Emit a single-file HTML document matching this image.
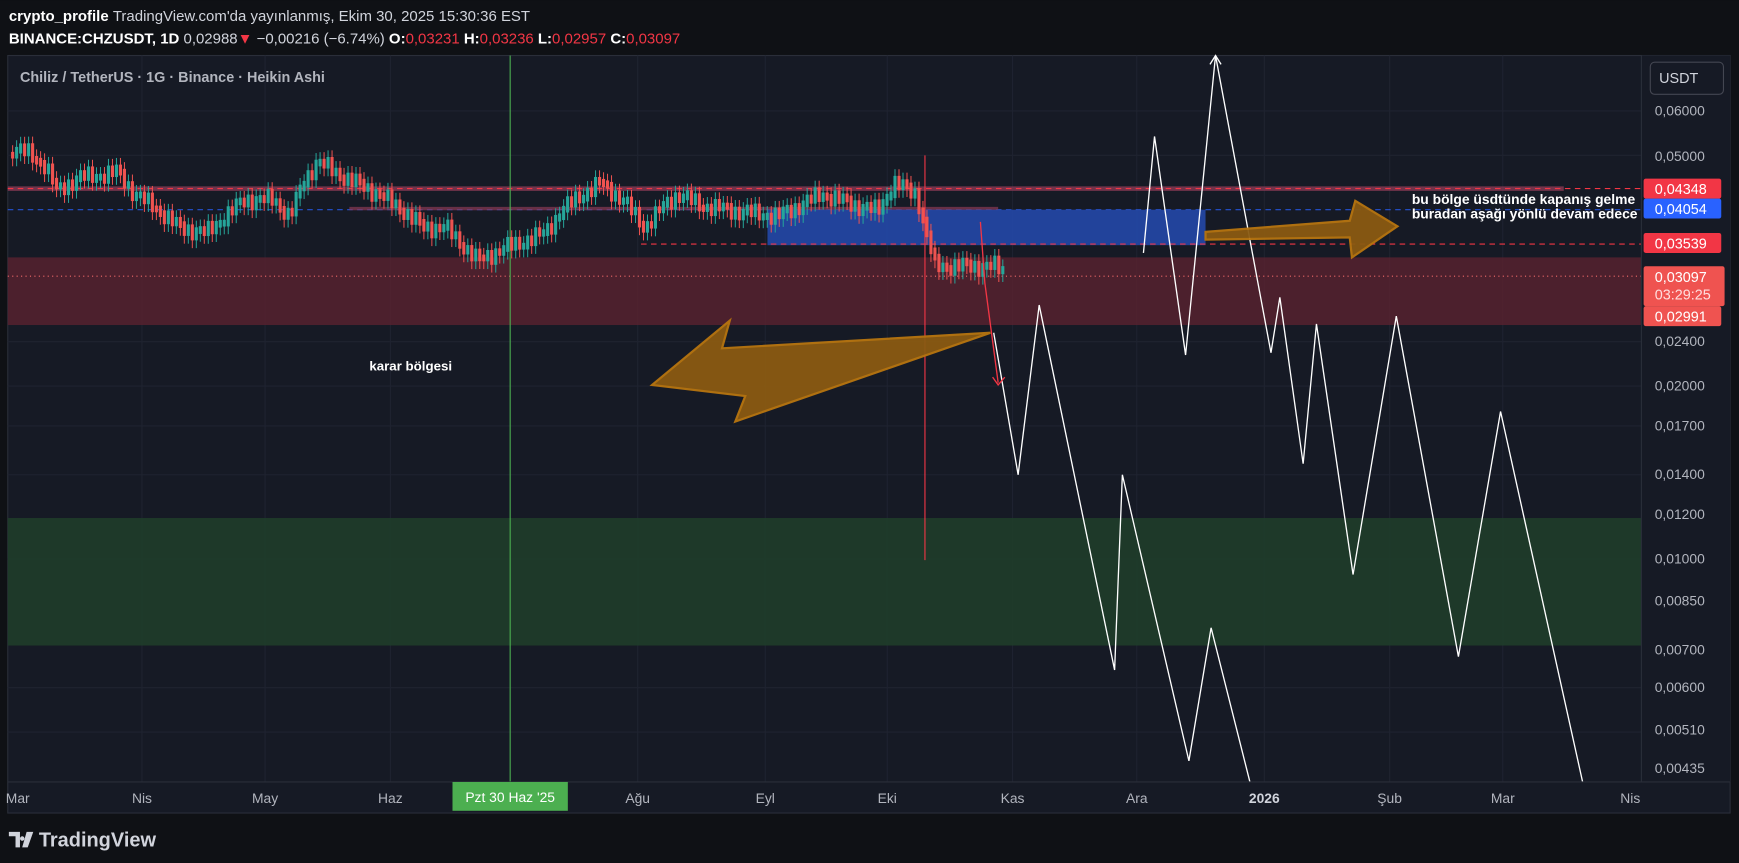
<!DOCTYPE html>
<html><head><meta charset="utf-8"><style>
html,body{margin:0;padding:0;background:#0f1115;overflow:hidden}
svg{display:block}
text{font-family:"Liberation Sans",sans-serif}
</style></head><body>
<svg id="s" width="1739" height="863" viewBox="0 0 1568 778" xmlns="http://www.w3.org/2000/svg">
<rect width="1568" height="778" fill="#0f1115"/>
<text x="8" y="19" font-size="13.5" fill="#fff" font-weight="bold">crypto_profile <tspan font-weight="normal" fill="#d1d4dc">TradingView.com'da yayınlanmış, Ekim 30, 2025 15:30:36 EST</tspan></text>
<text x="8" y="39" font-size="13.5" fill="#fff" font-weight="bold">BINANCE:CHZUSDT, 1D <tspan font-weight="normal" fill="#d1d4dc">0,02988</tspan><tspan fill="#f23645">▼</tspan><tspan font-weight="normal" fill="#d1d4dc"> −0,00216 (−6.74%) </tspan>O:<tspan fill="#f23645" font-weight="normal">0,03231</tspan> H:<tspan fill="#f23645" font-weight="normal">0,03236</tspan> L:<tspan fill="#f23645" font-weight="normal">0,02957</tspan> C:<tspan fill="#f23645" font-weight="normal">0,03097</tspan></text>
<rect x="7" y="50" width="1553" height="683" fill="#161a25" stroke="#2a2e39"/>
<g stroke="#1f2330" stroke-width="1">
<line x1="7" y1="100" x2="1480" y2="100"/><line x1="7" y1="140" x2="1480" y2="140"/><line x1="7" y1="308" x2="1480" y2="308"/><line x1="7" y1="348" x2="1480" y2="348"/><line x1="7" y1="384" x2="1480" y2="384"/><line x1="7" y1="428" x2="1480" y2="428"/><line x1="7" y1="504" x2="1480" y2="504"/><line x1="7" y1="620" x2="1480" y2="620"/><line x1="7" y1="660" x2="1480" y2="660"/>
<line x1="128" y1="50" x2="128" y2="705"/><line x1="239" y1="50" x2="239" y2="705"/><line x1="352" y1="50" x2="352" y2="705"/><line x1="575" y1="50" x2="575" y2="705"/><line x1="690" y1="50" x2="690" y2="705"/><line x1="800" y1="50" x2="800" y2="705"/><line x1="913" y1="50" x2="913" y2="705"/><line x1="1025" y1="50" x2="1025" y2="705"/><line x1="1140" y1="50" x2="1140" y2="705"/><line x1="1253" y1="50" x2="1253" y2="705"/><line x1="1355" y1="50" x2="1355" y2="705"/>
</g>
<rect x="7" y="232" width="1473" height="61" fill="#5a2230" opacity="0.8"/>
<rect x="7" y="467" width="1473" height="115" fill="#1f3d2a" opacity="0.9"/>
<line x1="7" y1="170" x2="1410" y2="170" stroke="#8a3a55" stroke-width="4" opacity="0.8"/>
<line x1="7" y1="170" x2="1480" y2="170" stroke="#f23645" stroke-dasharray="5,4"/>
<line x1="7" y1="189" x2="1480" y2="189" stroke="#2962ff" stroke-dasharray="5,4" opacity="0.8"/>
<line x1="315" y1="188" x2="900" y2="188" stroke="#8a3a55" stroke-width="3" opacity="0.7"/>
<rect x="692" y="189" width="395" height="32" fill="#2448a8" opacity="0.9"/>
<line x1="578" y1="220" x2="1480" y2="220" stroke="#f23645" stroke-dasharray="5,4"/>
<line x1="7" y1="249" x2="1480" y2="249" stroke="#f26a6a" stroke-dasharray="1,3"/>
<line x1="460" y1="50" x2="460" y2="705" stroke="#4caf50"/>
<line x1="834" y1="140" x2="834" y2="505" stroke="#f23645"/>
<g id="c"></g>
<polyline fill="none" stroke="#fff" stroke-width="1.2" points="1031,228 1041,123 1069,320 1096,50 1146,318 1154,268 1175,418 1187,292 1220,518 1259,285 1315,592 1353,371 1427,705"/>
<polyline fill="none" stroke="#fff" stroke-width="1.2" points="896,300 918,428 937,275 1005,604 1012,428 1072,686 1092,566 1127,705"/>
<polyline fill="none" stroke="#fff" stroke-width="1.2" points="1091,58 1096,50 1101,58"/>
<polyline fill="none" stroke="#f23645" stroke-width="1.2" points="884,200 888,255 900,345"/>
<polyline fill="none" stroke="#f23645" stroke-width="1.2" points="895,340 900,347 906,340"/>
<polygon points="893,300 663,380 672,357 588,347 658,289 651,314" fill="#8a5a12" stroke="#b8750f" stroke-width="2" opacity="0.95"/>
<polygon points="1087,209 1217,199 1222,181 1260,204 1219,232 1217,214 1087,216" fill="#8a5a12" stroke="#b8750f" stroke-width="2" opacity="0.95"/>
<text x="18" y="74" font-size="13" fill="#b2b5be" font-weight="bold">Chiliz / TetherUS · 1G · Binance · Heikin Ashi</text>
<text x="333" y="334" font-size="12" fill="#fff" font-weight="bold">karar bölgesi</text>
<text x="1273" y="184" font-size="12.5" fill="#fff" font-weight="bold">bu bölge üsdtünde kapanış gelme</text>
<text x="1273" y="197" font-size="12.5" fill="#fff" font-weight="bold">buradan aşağı yönlü devam edece</text>
<rect x="1480" y="50" width="80" height="655" fill="#161a25"/>
<line x1="1480" y1="50" x2="1480" y2="705" stroke="#2a2e39"/>
<rect x="1488" y="56" width="66" height="29" rx="4" fill="#161a25" stroke="#434651"/>
<text x="1496" y="75" font-size="13" fill="#d1d4dc">USDT</text>
<g font-size="12.5" fill="#b2b5be">
<text x="1492" y="104">0,06000</text><text x="1492" y="145">0,05000</text><text x="1492" y="312">0,02400</text><text x="1492" y="352">0,02000</text><text x="1492" y="388">0,01700</text><text x="1492" y="432">0,01400</text><text x="1492" y="468">0,01200</text><text x="1492" y="508">0,01000</text><text x="1492" y="546">0,00850</text><text x="1492" y="590">0,00700</text><text x="1492" y="624">0,00600</text><text x="1492" y="662">0,00510</text><text x="1492" y="697">0,00435</text>
</g>
<rect x="1482" y="161" width="70" height="18" rx="2" fill="#f23645"/><text x="1492" y="175" font-size="13" fill="#fff">0,04348</text>
<rect x="1482" y="179" width="70" height="18" rx="2" fill="#2962ff"/><text x="1492" y="193" font-size="13" fill="#fff">0,04054</text>
<rect x="1482" y="210" width="70" height="18" rx="2" fill="#f23645"/><text x="1492" y="224" font-size="13" fill="#fff">0,03539</text>
<rect x="1482" y="240" width="73" height="36" rx="2" fill="#ef5350"/><text x="1492" y="254" font-size="13" fill="#fff">0,03097</text><text x="1492" y="270" font-size="13" fill="#fdd">03:29:25</text>
<rect x="1482" y="276" width="70" height="18" rx="2" fill="#ef5350"/><text x="1492" y="290" font-size="13" fill="#fff">0,02991</text>
<line x1="7" y1="705" x2="1560" y2="705" stroke="#2a2e39"/>
<g font-size="12.5" fill="#b2b5be" text-anchor="middle">
<text x="16" y="724">Mar</text><text x="128" y="724">Nis</text><text x="239" y="724">May</text><text x="352" y="724">Haz</text><text x="575" y="724">Ağu</text><text x="690" y="724">Eyl</text><text x="800" y="724">Eki</text><text x="913" y="724">Kas</text><text x="1025" y="724">Ara</text><text x="1140" y="724" font-weight="bold" fill="#d1d4dc">2026</text><text x="1253" y="724">Şub</text><text x="1355" y="724">Mar</text><text x="1470" y="724">Nis</text>
</g>
<rect x="408" y="705" width="104" height="26" fill="#4caf50"/>
<text x="460" y="723" font-size="12.5" fill="#fff" text-anchor="middle">Pzt 30 Haz '25</text>
<path d="M8 750h10v14h-4v-10h-6z M20 754a2 2 0 1 0 0.1 0z M24 750h6l-5 14h-5z" fill="#d1d4dc"/>
<text x="35" y="763" font-size="18" fill="#d1d4dc" font-weight="bold">TradingView</text>
</svg>
<script>
var pts=[[10,135],[25,138],[40,150],[50,172],[70,160],[90,158],[105,155],[120,175],[140,188],[160,205],[185,210],[205,192],[220,180],[245,180],[260,195],[272,165],[285,145],[300,155],[320,165],[340,175],[360,188],[380,205],[400,205],[415,220],[430,235],[450,225],[470,218],[490,210],[505,190],[520,178],[540,165],[560,180],[580,205],[595,188],[610,175],[630,185],[660,190],[700,195],[720,185],[740,175],[770,185],[790,190],[805,165],[825,175],[835,215],[842,240],[860,240],[880,240],[895,240],[905,245]];
var g=document.getElementById('c'),h='',prev=null;
function yAt(x){for(var i=0;i<pts.length-1;i++){if(x>=pts[i][0]&&x<=pts[i+1][0]){var t=(x-pts[i][0])/(pts[i+1][0]-pts[i][0]);return pts[i][1]+t*(pts[i+1][1]-pts[i][1]);}}return 240;}
for(var x=10;x<=905;x+=3.6){var y=yAt(x)+Math.sin(x*0.7)*4+Math.sin(x*0.23)*3;var up=prev!==null&&y<prev;var c=up?'#26a69a':'#ef5350';var bt=Math.min(y,prev||y)-3,bh=Math.abs(y-(prev||y))+6;
h+='<line x1="'+(x+1.4)+'" y1="'+(bt-6)+'" x2="'+(x+1.4)+'" y2="'+(bt+bh+7)+'" stroke="'+c+'" stroke-width="0.9"/><rect x="'+x+'" y="'+bt+'" width="2.8" height="'+bh+'" fill="'+c+'"/>';prev=y;}
g.innerHTML=h;
</script>
</body></html>
